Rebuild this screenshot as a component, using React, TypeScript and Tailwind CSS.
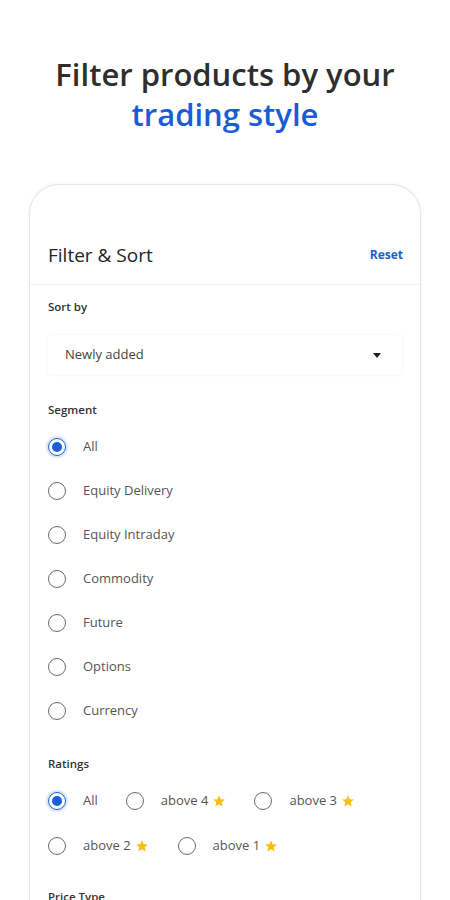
import React from "react";

function Radio({ checked }: { checked?: boolean }) {
  if (checked) {
    return (
      <span className="flex h-[18px] w-[18px] shrink-0 items-center justify-center rounded-full border-[1.5px] border-[#1a5fd6] shadow-[0_0_0_2px_#dbe6fb]">
        <span className="block h-[10px] w-[10px] rounded-full bg-[#1a5fd6]" />
      </span>
    );
  }
  return <span className="block h-[18px] w-[18px] shrink-0 rounded-full border-[1.5px] border-[#6b6b6b]" />;
}

function Star() {
  return (
    <svg width="14" height="14" viewBox="0 0 24 24" className="ml-[4px]">
      <path d="M12 2l2.9 6.9 7.1.6-5.4 4.7 1.7 7.3L12 17.6 5.7 21.5l1.7-7.3L2 9.5l7.1-.6z" fill="#f8bd14" />
    </svg>
  );
}

const segments = ["All", "Equity Delivery", "Equity Intraday", "Commodity", "Future", "Options", "Currency"];

export default function App() {
  return (
    <div className="h-[900px] w-[450px] overflow-hidden bg-white" style={{ fontFamily: '"Open Sans", "Noto Sans", sans-serif' }}>
      <div className="pt-[54px] text-center text-[31px] font-semibold leading-[40px] text-[#2e2e2e]">
        <div>Filter products by your</div>
        <div className="text-[#1a5bd6]">trading style</div>
      </div>
      <div className="mx-[29px] mt-[50px] h-[800px] rounded-t-[30px] border-[1.5px] border-b-0 border-[#e6e6e6] bg-white shadow-[0_0_4px_rgba(0,0,0,0.06)]">
        <div className="flex items-center justify-between pl-[18px] pr-[17px] pt-[58px] pb-[17px]">
          <span className="text-[19px] font-medium leading-[24px] text-[#242424]">Filter &amp; Sort</span>
          <span className="text-[12px] font-bold text-[#1a5fd0]">Reset</span>
        </div>
        <div className="h-px bg-[#f1f1f1]" />
        <div className="px-[18px]">
          <div className="pt-[14px] text-[11.5px] font-semibold leading-[16px] text-[#333]">Sort by</div>
          <div className="mt-[20px] flex h-[40px] items-center justify-between rounded-[4px] pl-[17px] pr-[21px] shadow-[0_0_3px_rgba(0,0,0,0.06)]">
            <span className="text-[13px] text-[#444]">Newly added</span>
            <svg width="8" height="5" viewBox="0 0 8 5"><path d="M0 0h8L4 5z" fill="#1f1f1f" /></svg>
          </div>
          <div className="pt-[27px] text-[11.5px] font-semibold leading-[16px] text-[#333]">Segment</div>
          <div className="mt-[20px] flex flex-col gap-[26px]">
            {segments.map((s, i) => (
              <div key={s} className="flex h-[18px] items-center">
                <Radio checked={i === 0} />
                <span className="ml-[17px] text-[13px] text-[#555]">{s}</span>
              </div>
            ))}
          </div>
          <div className="pt-[36px] text-[11.5px] font-semibold leading-[16px] text-[#333]">Ratings</div>
          <div className="mt-[20px] flex h-[18px] items-center">
            <Radio checked />
            <span className="ml-[17px] text-[13px] text-[#555]">All</span>
            <span className="ml-[28px]"><Radio /></span>
            <span className="ml-[17px] flex items-center text-[13px] text-[#555]">above 4<Star /></span>
            <span className="ml-[28px]"><Radio /></span>
            <span className="ml-[17px] flex items-center text-[13px] text-[#555]">above 3<Star /></span>
          </div>
          <div className="mt-[27px] flex h-[18px] items-center">
            <Radio />
            <span className="ml-[17px] flex items-center text-[13px] text-[#555]">above 2<Star /></span>
            <span className="ml-[29px]"><Radio /></span>
            <span className="ml-[17px] flex items-center text-[13px] text-[#555]">above 1<Star /></span>
          </div>
          <div className="pt-[34px] text-[11.5px] font-semibold leading-[16px] text-[#333]">Price Type</div>
        </div>
      </div>
    </div>
  );
}
